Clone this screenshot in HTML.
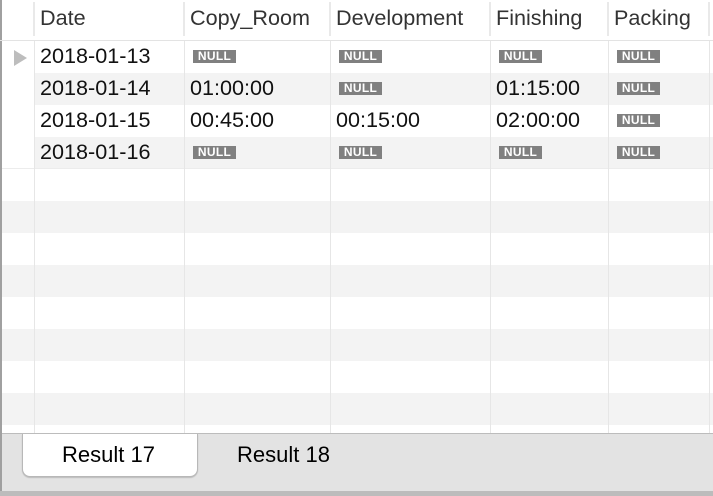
<!DOCTYPE html>
<html><head><style>
body{margin:0;width:713px;height:496px;overflow:hidden;background:#fff;font-family:"Liberation Sans",sans-serif;position:relative}
.a{position:absolute}
.row{position:absolute;left:34px;width:679px;height:32px}
.g{background:#f3f3f3}
.vl{position:absolute;width:1px;background:#e6e6e6;top:41px;height:393px}
.hl{position:absolute;width:2px;background:#e9e9e9;top:2px;height:34px}
.t{position:absolute;font-size:21.6px;color:#111;line-height:22px}
.h{position:absolute;font-size:21.6px;color:#333;top:7px;line-height:22px}
.n{position:absolute;width:43px;height:13px;background:#808080;color:#fff;font-size:12px;font-weight:bold;line-height:13px;text-align:center;letter-spacing:0.3px}
</style></head><body>
<div class="a" style="left:0;top:0;width:2px;height:496px;background:#a0a0a0"></div>
<div class="a" style="left:0;top:40px;width:713px;height:1px;background:#e3e3e3"></div>
<div class="row g" style="top:73px"></div>
<div class="row g" style="top:137px"></div>
<div class="row g" style="top:201px;left:2px;width:711px"></div>
<div class="row g" style="top:265px;left:2px;width:711px"></div>
<div class="row g" style="top:329px;left:2px;width:711px"></div>
<div class="row g" style="top:393px;left:2px;width:711px"></div>
<div class="a" style="left:2px;top:168px;width:711px;height:1px;background:#ececec"></div>
<div class="vl" style="left:34px"></div><div class="vl" style="left:184px"></div><div class="vl" style="left:330px"></div><div class="vl" style="left:490px"></div><div class="vl" style="left:608px"></div><div class="vl" style="left:709px"></div>
<div class="hl" style="left:33px"></div><div class="hl" style="left:183px"></div><div class="hl" style="left:329px"></div><div class="hl" style="left:489px"></div><div class="hl" style="left:607px"></div><div class="hl" style="left:708px"></div>
<div class="h" style="left:40px">Date</div><div class="h" style="left:190px">Copy_Room</div><div class="h" style="left:336px">Development</div><div class="h" style="left:496px">Finishing</div><div class="h" style="left:614px">Packing</div>
<div class="a" style="left:14px;top:50px;width:0;height:0;border-left:13px solid #bdbdbd;border-top:8px solid transparent;border-bottom:8px solid transparent"></div>
<div class="t" style="left:40px;top:45px">2018-01-13</div>
<div class="n" style="left:193px;top:50px">NULL</div><div class="n" style="left:339px;top:50px">NULL</div><div class="n" style="left:499px;top:50px">NULL</div><div class="n" style="left:617px;top:50px">NULL</div>
<div class="t" style="left:40px;top:77px">2018-01-14</div><div class="t" style="left:190px;top:77px">01:00:00</div>
<div class="n" style="left:339px;top:82px">NULL</div><div class="t" style="left:496px;top:77px">01:15:00</div><div class="n" style="left:617px;top:82px">NULL</div>
<div class="t" style="left:40px;top:109px">2018-01-15</div><div class="t" style="left:190px;top:109px">00:45:00</div><div class="t" style="left:336px;top:109px">00:15:00</div><div class="t" style="left:496px;top:109px">02:00:00</div><div class="n" style="left:617px;top:114px">NULL</div>
<div class="t" style="left:40px;top:141px">2018-01-16</div>
<div class="n" style="left:193px;top:146px">NULL</div><div class="n" style="left:339px;top:146px">NULL</div><div class="n" style="left:499px;top:146px">NULL</div><div class="n" style="left:617px;top:146px">NULL</div>
<div class="a" style="left:2px;top:433px;width:711px;height:58px;background:#e3e3e3;border-top:1px solid #bcbcbc"></div>
<div class="a" style="left:0;top:491px;width:713px;height:5px;background:#bcbcbc"></div>
<div class="a" style="left:22px;top:434px;width:174px;height:42px;background:#fff;border:1px solid #b8b8b8;border-top:none;border-radius:0 0 8px 8px;box-shadow:0 1px 1px #bbb"></div>
<div class="t" style="left:62px;top:444px;color:#000;font-size:22px">Result 17</div>
<div class="t" style="left:237px;top:444px;color:#000;font-size:22px">Result 18</div>
</body></html>
